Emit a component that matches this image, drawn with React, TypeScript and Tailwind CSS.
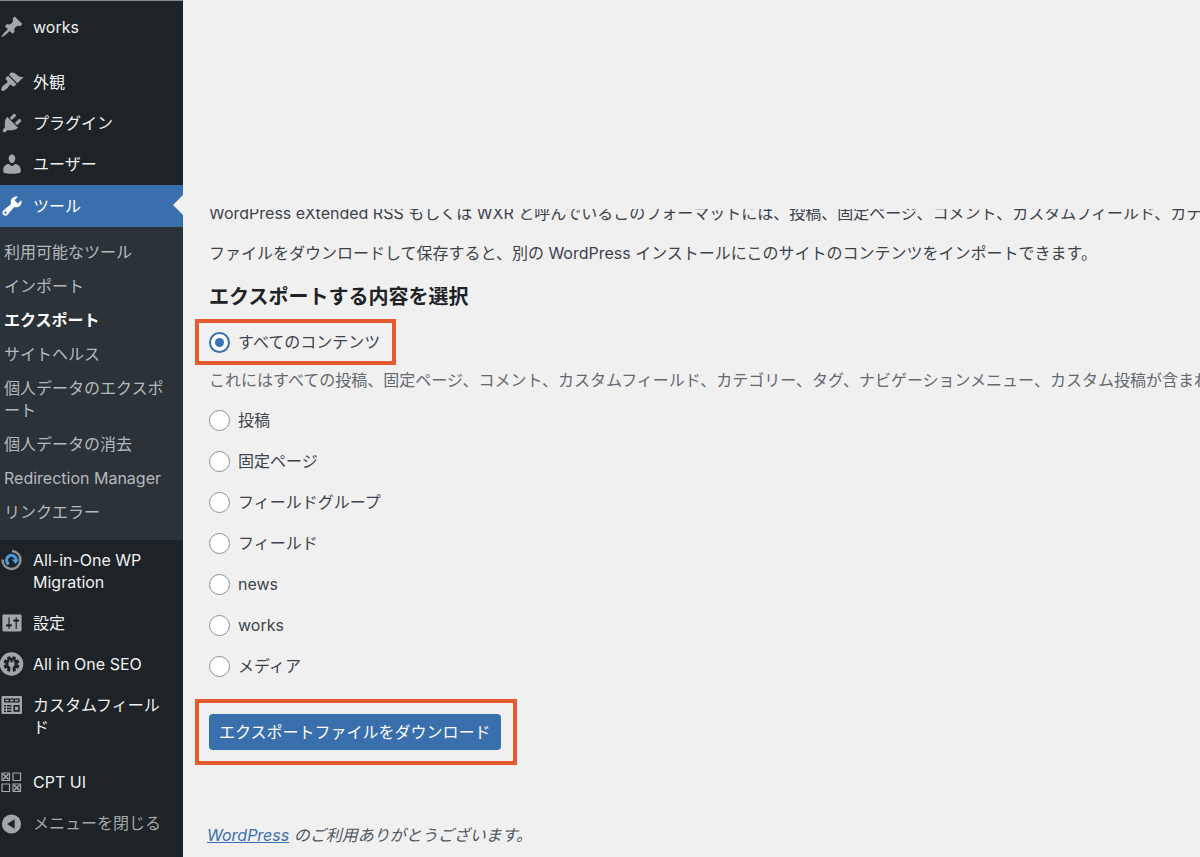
import type { ReactNode } from "react";
import clsx from "clsx";

function Dashicon({ d }: { d: string }) {
  return (
    <svg viewBox="0 0 20 20" className="size-6 shrink-0" fill="currentColor" aria-hidden="true">
      <path d={d} />
    </svg>
  );
}

const paths = {
  pin: "M10.44 3.02l1.82-1.82 6.36 6.35-1.83 1.82c-1.05-.68-2.48-.57-3.41.36l-.75.75c-.92.93-1.04 2.35-.35 3.41l-1.83 1.82-2.41-2.41-2.8 2.79c-.42.42-3.38 2.71-3.8 2.29s1.86-3.39 2.28-3.81l2.79-2.79L4.1 9.36l1.83-1.82c1.05.69 2.48.57 3.4-.36l.75-.75c.93-.92 1.05-2.35.36-3.41z",
  brush:
    "M14.48 11.06L7.41 3.99l1.5-1.5c.5-.56 2.3-.47 3.51.32 1.21.8 1.43 1.28 2.91 2.1 1.18.64 2.45 1.26 4.45.85zm-.71.71L6.7 4.7 4.93 6.47c-.39.39-.39 1.02 0 1.41l1.06 1.06c.39.39.39 1.03 0 1.42-.6.6-1.43 1.11-2.21 1.69-.35.26-.7.53-1.01.84C1.43 14.23.4 16.08 1.4 17.07c.99 1 2.84-.03 4.18-1.36.31-.31.58-.66.85-1.02.57-.78 1.08-1.61 1.69-2.21.39-.39 1.02-.39 1.41 0l1.06 1.06c.39.39 1.02.39 1.41 0z",
  plug: "M13.11 4.36L9.87 7.6 8 5.73l3.24-3.24c.35-.34 1.05-.2 1.56.32.52.51.66 1.21.31 1.55zm-8 1.77l.91-1.12 9.01 9.01-1.19.84c-.71.71-2.63 1.16-3.82 1.16H6.14L4.9 17.26c-.59.59-1.54.59-2.12 0-.59-.58-.59-1.53 0-2.12l1.24-1.24v-3.88c0-1.13.4-3.19 1.09-3.89zm7.26 3.97l3.24-3.24c.34-.35 1.04-.21 1.55.31.52.51.66 1.21.31 1.55l-3.24 3.25z",
  user: "M10 9.25c-2.27 0-2.73-3.44-2.73-3.44C7 4.02 7.82 2 9.97 2c2.16 0 2.98 2.02 2.71 3.81 0 0-.41 3.44-2.68 3.44zm0 2.57L12.72 10c2.39 0 4.52 2.33 4.52 4.53v2.49s-3.65 1.13-7.24 1.13c-3.65 0-7.24-1.13-7.24-1.13v-2.49c0-2.25 1.94-4.48 4.47-4.48z",
  wrench:
    "M16.68 9.77c-1.34 1.34-3.3 1.67-4.95.99l-5.41 6.52c-.99.99-2.59.99-3.58 0s-.99-2.59 0-3.57l6.52-5.42c-.68-1.65-.35-3.61.99-4.95 1.28-1.28 3.12-1.62 4.72-1.06l-2.89 2.89 2.82 2.82 2.86-2.87c.53 1.58.18 3.39-1.08 4.65zM3.81 16.21c.4.39 1.04.39 1.43 0 .4-.4.4-1.04 0-1.43-.39-.4-1.03-.4-1.43 0-.39.39-.39 1.03 0 1.43z",
  settings:
    "M18 16V4c0-.55-.45-1-1-1H3c-.55 0-1 .45-1 1v12c0 .55.45 1 1 1h14c.55 0 1-.45 1-1zM8 11h1c.55 0 1 .45 1 1s-.45 1-1 1H8v1.5c0 .28-.22.5-.5.5s-.5-.22-.5-.5V13H6c-.55 0-1-.45-1-1s.45-1 1-1h1V5.5c0-.28.22-.5.5-.5s.5.22.5.5V11zm5-2h-1c-.55 0-1-.45-1-1s.45-1 1-1h1V5.5c0-.28.22-.5.5-.5s.5.22.5.5V7h1c.55 0 1 .45 1 1s-.45 1-1 1h-1v5.5c0 .28-.22.5-.5.5s-.5-.22-.5-.5V9z",
};

function MigrationIcon() {
  return (
    <svg viewBox="0 0 24 24" className="size-6 shrink-0" fill="none" aria-hidden="true">
      <path d="M12 3a9 9 0 1 1-9.500 8.500" stroke="#8f9498" strokeWidth="2.400" />
      <path d="M8.800 16.200A4.800 4.800 0 1 1 16.200 12" stroke="#4a9ade" strokeWidth="3" />
      <path d="M11.800 11.400h7.400l-3.600 4.600z" fill="#4a9ade" />
    </svg>
  );
}

function SeoIcon() {
  return (
    <svg viewBox="0 0 24 24" className="size-6 shrink-0" aria-hidden="true">
      <circle cx="11.5" cy="12" r="11.8" fill="currentColor" />
      <g fill="#1d2327">
        <circle cx="11.5" cy="12" r="6" />
        {[0, 45, 90, 135, 180, 225, 270, 315].map((a) => (
          <rect key={a} x="9.7" y="4" width="3.6" height="4" rx="0.8" transform={`rotate(${a + 22.5} 11.5 12)`} />
        ))}
      </g>
      <path
        d="M9.2 8.2v2.2h1.2V8.2M12.6 8.2v2.2h1.2V8.2M8.4 10.2h6.2v2.4c0 1.3-.9 2.1-1.9 2.3V20h-2.4v-5.1c-1-.2-1.9-1-1.9-2.3z"
        fill="currentColor"
      />
    </svg>
  );
}

function FieldsIcon() {
  return (
    <svg viewBox="0 0 24 24" className="size-6 shrink-0" aria-hidden="true">
      <rect x="1.5" y="3" width="20.5" height="18" rx="1" fill="currentColor" />
      <path
        d="M4 5.6h15.6v3.8H4zM4 12h2v1.5H4zM7 12h4.5v1.5H7zM4 14.8h2v1.5H4zM7 14.8h4.5v1.5H7zM4 17.5h2V19H4zM7 17.5h4.5V19H7zM13.5 12h6.2v6.8h-6.2z"
        fill="#1d2327"
      />
      <path d="M5.4 6.8h3.2v1.5H5.4zM10.2 6.8h3.2v1.5h-3.2zM15 6.8h3.2v1.5H15zM15 13.8h3.2V17H15z" fill="currentColor" />
    </svg>
  );
}

function CptIcon() {
  return (
    <svg viewBox="0 0 24 24" className="size-6 shrink-0" fill="none" stroke="currentColor" aria-hidden="true">
      <path d="M2 3h7.5v7.5H2zM13 3h7.5v7.5H13zM2 14h7.5v7.5H2zM13 14h7.5v7.5H13z" strokeWidth="1.2" />
      <path d="M3 4l5.5 5.5M8.5 4L3 9.5M14 15l5.5 5.5M19.5 15L14 20.5" strokeWidth="1.6" />
    </svg>
  );
}

function CollapseIcon() {
  return (
    <svg viewBox="0 0 24 24" className="size-6 shrink-0" aria-hidden="true">
      <circle cx="11.5" cy="12" r="9.6" fill="currentColor" />
      <path d="M14.6 7.2v9.6L7 12z" fill="#1d2327" />
    </svg>
  );
}

function MenuItem({
  icon,
  label,
  active,
  separated,
}: {
  icon: ReactNode;
  label: string;
  active?: boolean;
  separated?: boolean;
}) {
  return (
    <li className={clsx(separated && "mt-3.5")}>
      <a
        href="#"
        aria-current={active ? "true" : undefined}
        className={clsx(
          "relative flex items-start gap-[9px] pr-4 text-[16px] leading-[22px]",
          active ? "bg-[#3a6fae] py-2.5 text-white" : "pt-[9px] pb-2.5 text-[#f0f0f1]",
        )}
      >
        <span className={clsx("-my-px shrink-0", active ? "text-white" : "text-[#a2a7ab]")}>{icon}</span>
        <span className="min-w-0">{label}</span>
        {active && (
          <span className="absolute top-2.5 right-0 border-y-10 border-r-10 border-y-transparent border-r-[#f0f0f1]" />
        )}
      </a>
    </li>
  );
}

const toolLinks = [
  "利用可能なツール",
  "インポート",
  "エクスポート",
  "サイトヘルス",
  "個人データのエクスポート",
  "個人データの消去",
  "Redirection Manager",
  "リンクエラー",
];

function Sidebar() {
  return (
    <nav className="w-[183px] shrink-0 border-t border-[#85898c] bg-[#1d2327] pt-1.5">
      <ul>
        <MenuItem icon={<Dashicon d={paths.pin} />} label="works" />
        <MenuItem icon={<Dashicon d={paths.brush} />} label="外観" separated />
        <MenuItem icon={<Dashicon d={paths.plug} />} label="プラグイン" />
        <MenuItem icon={<Dashicon d={paths.user} />} label="ユーザー" />
        <MenuItem icon={<Dashicon d={paths.wrench} />} label="ツール" active />
      </ul>
      <ul className="bg-[#2c3338] pt-2 pb-[11px] text-[#b4b9be]">
        {toolLinks.map((label) => (
          <li key={label}>
            <a
              href="#"
              className={clsx(
                "block py-1.5 pr-3 pl-1 text-[16px] leading-[22px]",
                label === "エクスポート" && "font-bold text-white",
              )}
            >
              {label}
            </a>
          </li>
        ))}
      </ul>
      <ul>
        <MenuItem icon={<MigrationIcon />} label="All-in-One WP Migration" />
        <MenuItem icon={<Dashicon d={paths.settings} />} label="設定" />
        <MenuItem icon={<SeoIcon />} label="All in One SEO" />
        <MenuItem icon={<FieldsIcon />} label="カスタムフィールド" />
        <MenuItem icon={<CptIcon />} label="CPT UI" separated />
        <li>
          <button type="button" className="flex gap-[9px] pt-[9px] text-[16px] leading-[22px] text-[#a2a7ab]">
            <CollapseIcon />
            メニューを閉じる
          </button>
        </li>
      </ul>
    </nav>
  );
}

function ContentRadio({ value, label, defaultChecked }: { value: string; label: string; defaultChecked?: boolean }) {
  return (
    <label className="flex items-center gap-2 text-[16px] leading-6">
      <input
        type="radio"
        name="content"
        value={value}
        defaultChecked={defaultChecked}
        className="grid size-[21px] shrink-0 appearance-none place-items-center rounded-full border border-[#8c8f94] bg-white checked:border-2 checked:border-[#3a6fae] checked:before:size-[9px] checked:before:rounded-full checked:before:bg-[#3a74b8]"
      />
      {label}
    </label>
  );
}

const contentTypes = [
  { value: "posts", label: "投稿" },
  { value: "pages", label: "固定ページ" },
  { value: "acf-field-group", label: "フィールドグループ" },
  { value: "acf-field", label: "フィールド" },
  { value: "news", label: "news" },
  { value: "works", label: "works" },
  { value: "attachment", label: "メディア" },
];

export default function App() {
  return (
    <div className="flex min-h-screen bg-[#f0f0f1] font-['Inter','Noto_Sans_CJK_JP',sans-serif] text-[#3c434a]">
      <Sidebar />
      <main className="min-w-0 flex-1 overflow-hidden pt-[209px] pb-2.5 pl-[26px] text-[16px] leading-6">
        {/* the first line is half scrolled under the blank area above */}
        <div className="flex h-4 items-end overflow-hidden whitespace-nowrap">
          <p>
            WordPress eXtended RSS もしくは WXR
            と呼んでいるこのフォーマットには、投稿、固定ページ、コメント、カスタムフィールド、カテゴリー、タグが含まれます。
          </p>
        </div>
        <p className="mt-4 whitespace-nowrap">
          ファイルをダウンロードして保存すると、別の WordPress インストールにこのサイトのコンテンツをインポートできます。
        </p>
        <h2 className="mt-[18px] text-[20px] leading-7 font-bold text-[#1d2327]">エクスポートする内容を選択</h2>
        <form onSubmit={(e) => e.preventDefault()}>
          <fieldset>
            <legend className="sr-only">エクスポートする内容</legend>
            <div className="mt-2 -ml-3.5 w-fit border-4 border-[#e65a32] py-[7px] pr-3 pl-2.5">
              <ContentRadio value="all" label="すべてのコンテンツ" defaultChecked />
            </div>
            <p className="mt-[3px] whitespace-nowrap text-[#646970]">
              これにはすべての投稿、固定ページ、コメント、カスタムフィールド、カテゴリー、タグ、ナビゲーションメニュー、カスタム投稿が含まれます。
            </p>
            <div className="mt-4 flex flex-col gap-[17px]">
              {contentTypes.map((type) => (
                <ContentRadio key={type.value} value={type.value} label={type.label} />
              ))}
            </div>
          </fieldset>
          <div className="mt-[21px] -ml-3.5 w-fit border-4 border-[#e65a32] py-[11px] pr-3 pl-2.5">
            <button type="submit" className="block rounded-sm bg-[#3a6fae] px-2.5 py-1.5 text-white">
              エクスポートファイルをダウンロード
            </button>
          </div>
        </form>
        <p className="mt-[58px] -ml-0.5 text-[#50575e] italic">
          <a href="#" className="text-[#3a6fae] underline">
            WordPress
          </a>{" "}
          のご利用ありがとうございます。
        </p>
      </main>
    </div>
  );
}
